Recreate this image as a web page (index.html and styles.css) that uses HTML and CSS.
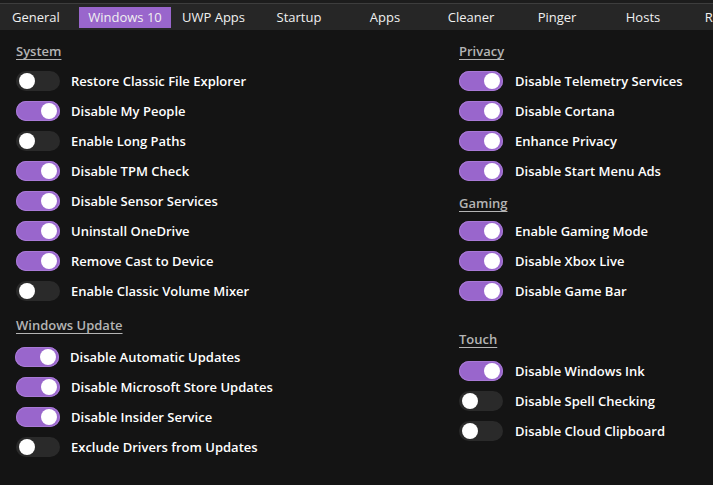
FILE: index.html
```html
<!DOCTYPE html>
<html lang="en">
<head>
  <meta charset="UTF-8">
  <title>Optimizer - Windows 10</title>
  <link rel="stylesheet" href="styles.css">
</head>
<body>
  <div class="topline"></div>
  <nav class="tabs">
    <div class="tab tab-first">General</div>
    <div class="tab tab-active">Windows 10</div>
    <div class="tab tab-uwp">UWP Apps</div>
    <div class="tab">Startup</div>
    <div class="tab">Apps</div>
    <div class="tab">Cleaner</div>
    <div class="tab">Pinger</div>
    <div class="tab">Hosts</div>
    <div class="tab">Registry</div>
  </nav>

  <main class="content">
    <div class="column">
      <h2 class="section">System</h2>
      <div class="row"><span class="toggle"></span>Restore Classic File Explorer</div>
      <div class="row"><span class="toggle on"></span>Disable My People</div>
      <div class="row"><span class="toggle"></span>Enable Long Paths</div>
      <div class="row"><span class="toggle on"></span>Disable TPM Check</div>
      <div class="row"><span class="toggle on"></span>Disable Sensor Services</div>
      <div class="row"><span class="toggle on"></span>Uninstall OneDrive</div>
      <div class="row"><span class="toggle on"></span>Remove Cast to Device</div>
      <div class="row"><span class="toggle"></span>Enable Classic Volume Mixer</div>

      <h2 class="section section-update">Windows Update</h2>
      <div class="row row-shift"><span class="toggle on"></span>Disable Automatic Updates</div>
      <div class="row"><span class="toggle on"></span>Disable Microsoft Store Updates</div>
      <div class="row"><span class="toggle on"></span>Disable Insider Service</div>
      <div class="row"><span class="toggle"></span>Exclude Drivers from Updates</div>
    </div>

    <div class="column column-right">
      <h2 class="section">Privacy</h2>
      <div class="row"><span class="toggle on"></span>Disable Telemetry Services</div>
      <div class="row"><span class="toggle on"></span>Disable Cortana</div>
      <div class="row"><span class="toggle on"></span>Enhance Privacy</div>
      <div class="row"><span class="toggle on"></span>Disable Start Menu Ads</div>

      <h2 class="section section-gaming">Gaming</h2>
      <div class="row"><span class="toggle on"></span>Enable Gaming Mode</div>
      <div class="row"><span class="toggle on"></span>Disable Xbox Live</div>
      <div class="row"><span class="toggle on"></span>Disable Game Bar</div>

      <h2 class="section section-touch">Touch</h2>
      <div class="row"><span class="toggle on"></span>Disable Windows Ink</div>
      <div class="row"><span class="toggle"></span>Disable Spell Checking</div>
      <div class="row"><span class="toggle"></span>Disable Cloud Clipboard</div>
    </div>
  </main>
</body>
</html>
```

FILE: styles.css
```css
/* Global */
body {
  margin: 0;
  height: 485px;
  overflow: hidden;
  background: #141414;
  color: #ffffff;
  font-family: 'Open Sans', 'Noto Sans', sans-serif;
  font-size: 13px;
}

.topline {
  height: 3px;
  background: #1c1c1c;
  border-bottom: 1px solid #3d3d3d;
}

/* Tabs */
.tabs {
  display: flex;
  height: 26px;
  background: #262626;
  white-space: nowrap;
  overflow: hidden;
}

.tab {
  flex: 0 0 86px;
  height: 21px;
  margin-top: 3px;
  line-height: 21px;
  text-align: center;
  color: #f0f0f0;
}

.tab-first {
  flex-basis: 79px;
  text-align: left;
  padding-left: 12px;
  box-sizing: border-box;
}

.tab-active {
  flex-basis: 92px;
  background: #9966cc;
}

.tab-uwp {
  flex-basis: 85px;
}

/* Content */
.content {
  display: grid;
  grid-template-columns: 443px 1fr;
  padding: 11px 0 0 16px;
}

.section {
  margin: 0 0 5px;
  height: 20px;
  line-height: 20px;
  font-size: 13px;
  font-weight: 600;
  color: #b4b4b4;
  text-decoration: underline;
  text-underline-offset: 3px;
}

.section-update {
  margin-top: 9px;
  margin-bottom: 7px;
}

.section-gaming {
  margin-top: 7px;
  margin-bottom: 3px;
}

.section-touch {
  margin-top: 23px;
  margin-bottom: 7px;
}

.row {
  display: flex;
  align-items: center;
  height: 30px;
  font-weight: 600;
  color: #ffffff;
}

.row-shift {
  margin-left: -1px;
}

/* Toggle switch */
.toggle {
  position: relative;
  flex: none;
  width: 44px;
  height: 20px;
  margin-right: 11px;
  border-radius: 10px;
  background: #2a2a2a;
}

.column-right .toggle {
  margin-right: 12px;
}

.toggle::after {
  content: "";
  position: absolute;
  top: 2px;
  left: 3px;
  width: 16px;
  height: 16px;
  border-radius: 50%;
  background: #ffffff;
}

.toggle.on {
  background: #9966cc;
  box-shadow: inset 0 0 0 1px #a879d6;
}

.toggle.on::after {
  left: auto;
  right: 3px;
}
```
